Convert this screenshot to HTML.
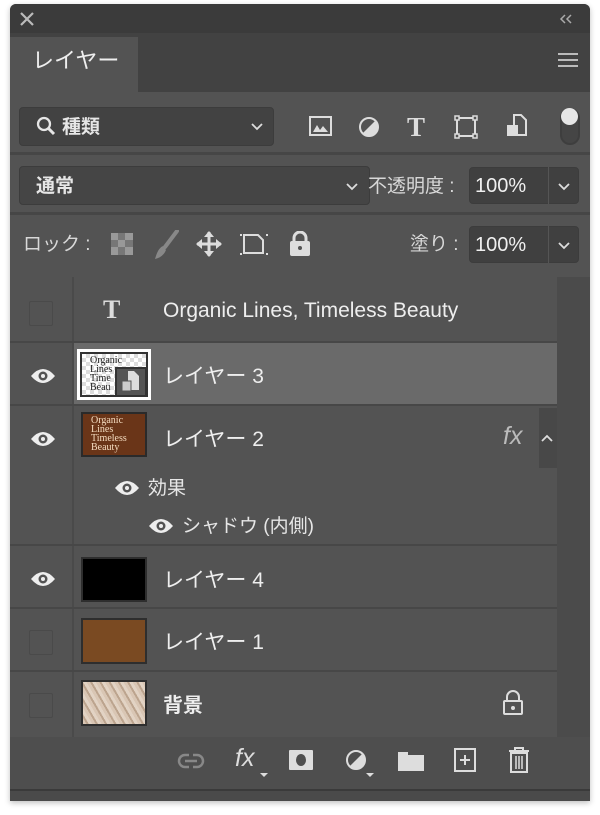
<!DOCTYPE html>
<html><head><meta charset="utf-8"><style>
*{margin:0;padding:0;box-sizing:border-box}
body{width:600px;height:815px;background:#fff;position:relative;overflow:hidden;font-family:"Liberation Sans","Noto Sans CJK JP",sans-serif;color:#e6e6e6}
.a{position:absolute}
.panel{left:10px;top:4px;width:580px;height:797px;background:#535353;border-radius:6px 6px 0 0;overflow:hidden;box-shadow:0 2px 6px rgba(0,0,0,.25)}
.t{font-size:19px;white-space:nowrap}
.box{background:#444;border:1px solid #3c3c3c;border-radius:4px}
.row{border-bottom:2px solid #474747}
svg{position:absolute}
.s{position:absolute;left:0;top:-4px;width:580px;height:801px}
</style></head><body>
<div class="a panel">
 <div class="a" style="left:0;top:0;width:580px;height:29px;background:#3b3b3b"></div>
 <svg style="left:10px;top:8px" width="14" height="14"><path d="M1 1l12 12M13 1L1 13" stroke="#bbb" stroke-width="2.2"/></svg>
 <svg style="left:549px;top:10px" width="14" height="10"><path d="M6 1L2 5l4 4M12 1L8 5l4 4" stroke="#aaa" stroke-width="1.5" fill="none"/></svg>
 <div class="a" style="left:0;top:29px;width:580px;height:59px;background:#424242"></div>
 <div class="a" style="left:0;top:33px;width:128px;height:55px;background:#535353"></div>
 <div class="a t" style="left:22px;top:39px;font-size:22px;color:#eee">レイヤー</div>
 <div class="a" style="left:548px;top:49px;width:20px;height:14px;border-top:2px solid #bbb;border-bottom:2px solid #bbb"></div>
 <div class="a" style="left:548px;top:55px;width:20px;height:4px;border-top:2px solid #bbb"></div>
 <div class="s">
 <!-- filter row -->
 <div class="a box" style="left:9px;top:107px;width:255px;height:39px;background:#424242"></div>
 <svg style="left:26px;top:116px" width="20" height="20"><circle cx="8" cy="8" r="6" stroke="#e6e6e6" stroke-width="2.3" fill="none"/><path d="M12 12l6 6" stroke="#e6e6e6" stroke-width="3"/></svg>
 <div class="a t" style="left:52px;top:112px;font-weight:bold">種類</div>
 <svg style="left:241px;top:123px" width="12" height="8"><path d="M1 1l5 5 5-5" stroke="#ddd" stroke-width="1.8" fill="none"/></svg>
 <svg style="left:299px;top:116px" width="24" height="22"><rect x="1" y="1" width="21" height="18" stroke="#ddd" stroke-width="2" fill="none"/><path d="M4 16l4-7 3 5 3-4 5 6z" fill="#ddd"/></svg>
 <svg style="left:348px;top:116px" width="22" height="22"><circle cx="11" cy="11" r="9" stroke="#ddd" stroke-width="2" fill="none"/><path d="M17.4 4.6A9 9 0 0 1 4.6 17.4z" fill="#ddd"/></svg>
 <div class="a" style="left:397px;top:112px;font-family:'Liberation Serif',serif;font-size:27px;font-weight:bold;color:#ddd">T</div>
 <svg style="left:444px;top:115px" width="24" height="24"><rect x="3" y="3" width="18" height="18" stroke="#ddd" stroke-width="2" fill="none"/><g fill="#535353" stroke="#ddd" stroke-width="1.5"><rect x="1" y="1" width="4" height="4"/><rect x="19" y="1" width="4" height="4"/><rect x="1" y="19" width="4" height="4"/><rect x="19" y="19" width="4" height="4"/></g></svg>
 <svg style="left:496px;top:114px" width="22" height="26"><path d="M8 1h7l5 5v15H8z" stroke="#ddd" stroke-width="2" fill="none"/><rect x="1" y="11" width="11" height="11" fill="#ddd"/></svg>
 <div class="a" style="left:550px;top:108px;width:20px;height:37px;border:2px solid #3e3e3e;border-radius:10px;background:#454545"></div>
 <div class="a" style="left:551px;top:108px;width:17px;height:17px;border-radius:50%;background:#e6e6e6"></div>
 <div class="a" style="left:0;top:152px;width:580px;height:3px;background:#464646"></div>
 <!-- blend row -->
 <div class="a box" style="left:9px;top:166px;width:351px;height:39px;background:#454545"></div>
 <div class="a t" style="left:26px;top:171px;font-weight:bold">通常</div>
 <svg style="left:336px;top:183px" width="12" height="8"><path d="M1 1l5 5 5-5" stroke="#ddd" stroke-width="1.8" fill="none"/></svg>
 <div class="a t" style="left:358px;top:171px;color:#d8d8d8">不透明度 :</div>
 <div class="a box" style="left:459px;top:167px;width:110px;height:37px;background:#404040"></div>
 <div class="a" style="left:538px;top:167px;width:1px;height:37px;background:#555"></div>
 <div class="a t" style="left:465px;top:175px;font-size:20px;color:#f0f0f0">100%</div>
 <svg style="left:548px;top:183px" width="12" height="8"><path d="M1 1l5 5 5-5" stroke="#ddd" stroke-width="1.8" fill="none"/></svg>
 <div class="a" style="left:0;top:212px;width:580px;height:3px;background:#464646"></div>
 <!-- lock row -->
 <div class="a t" style="left:13px;top:229px;color:#d8d8d8">ロック :</div>
 <svg style="left:101px;top:233px" width="22" height="22"><rect width="22" height="22" fill="#777"/><g fill="#999"><rect x="0" y="0" width="7" height="7"/><rect x="14" y="0" width="8" height="7"/><rect x="7" y="7" width="7" height="7"/><rect x="0" y="14" width="7" height="8"/><rect x="14" y="14" width="8" height="8"/></g></svg>
 <svg style="left:143px;top:230px" width="26" height="30"><path d="M24 1L12 17" stroke="#888" stroke-width="4" stroke-linecap="round"/><path d="M10 16c-4 2-6 6-8 13 5-1 9-4 11-9z" fill="#888"/></svg>
 <svg style="left:186px;top:231px" width="26" height="26"><path d="M13 1v24M1 13h24" stroke="#ddd" stroke-width="3"/><path d="M13 0l-5 6h10zM13 26l-5-6h10zM0 13l6-5v10zM26 13l-6-5v10z" fill="#ddd"/></svg>
 <svg style="left:230px;top:231px" width="28" height="26"><path d="M4 4h14l5 5v13H4z" stroke="#ddd" stroke-width="2" fill="none"/><g fill="#ddd"><rect x="0" y="3" width="2" height="2"/><rect x="26" y="3" width="2" height="2"/><rect x="0" y="22" width="2" height="2"/><rect x="26" y="22" width="2" height="2"/></g></svg>
 <svg style="left:279px;top:231px" width="22" height="26"><path d="M5 11V7a6 6 0 0 1 12 0v4" stroke="#ddd" stroke-width="3" fill="none"/><rect x="1" y="10" width="20" height="15" rx="2" fill="#ddd"/><circle cx="11" cy="17" r="2" fill="#535353"/></svg>
 <div class="a t" style="left:400px;top:229px;color:#d8d8d8">塗り :</div>
 <div class="a box" style="left:459px;top:226px;width:110px;height:37px;background:#404040"></div>
 <div class="a" style="left:538px;top:226px;width:1px;height:37px;background:#555"></div>
 <div class="a t" style="left:465px;top:234px;font-size:20px;color:#f0f0f0">100%</div>
 <svg style="left:548px;top:242px" width="12" height="8"><path d="M1 1l5 5 5-5" stroke="#ddd" stroke-width="1.8" fill="none"/></svg>
 <!-- layers -->
 <div class="a" style="left:0;top:277px;width:580px;height:460px;background:#535353"></div>
 <div class="a" style="left:62px;top:277px;width:2px;height:460px;background:#4a4a4a"></div>
 <div class="a" style="left:547px;top:277px;width:33px;height:460px;background:#4b4b4b"></div>
 <div class="a row" style="left:0;top:277px;width:547px;height:66px"></div>
 <div class="a row" style="left:0;top:343px;width:547px;height:63px"></div>
 <div class="a" style="left:64px;top:343px;width:483px;height:61px;background:#6a6a6a"></div>
 <div class="a row" style="left:0;top:406px;width:547px;height:140px"></div>
 <div class="a row" style="left:0;top:546px;width:547px;height:63px"></div>
 <div class="a row" style="left:0;top:609px;width:547px;height:63px"></div>
 <div class="a" style="left:529px;top:408px;width:18px;height:60px;background:#484848"></div>
 <!-- checkboxes -->
 <div class="a" style="left:19px;top:301px;width:24px;height:25px;border:1px solid #4a4a4a;border-radius:2px"></div>
 <div class="a" style="left:19px;top:630px;width:24px;height:25px;border:1px solid #4a4a4a;border-radius:2px"></div>
 <div class="a" style="left:19px;top:693px;width:24px;height:25px;border:1px solid #4a4a4a;border-radius:2px"></div>
 <!-- eyes -->
 <svg style="left:20px;top:367px" width="26" height="18"><path d="M1 9Q13-5 25 9Q13 23 1 9z" fill="#eee"/><circle cx="13" cy="9" r="4.5" fill="#535353"/><circle cx="13" cy="9" r="2" fill="#eee"/></svg>
 <svg style="left:20px;top:430px" width="26" height="18"><path d="M1 9Q13-5 25 9Q13 23 1 9z" fill="#eee"/><circle cx="13" cy="9" r="4.5" fill="#535353"/><circle cx="13" cy="9" r="2" fill="#eee"/></svg>
 <svg style="left:104px;top:479px" width="26" height="18"><path d="M1 9Q13-5 25 9Q13 23 1 9z" fill="#eee"/><circle cx="13" cy="9" r="4.5" fill="#535353"/><circle cx="13" cy="9" r="2" fill="#eee"/></svg>
 <svg style="left:138px;top:517px" width="26" height="18"><path d="M1 9Q13-5 25 9Q13 23 1 9z" fill="#eee"/><circle cx="13" cy="9" r="4.5" fill="#535353"/><circle cx="13" cy="9" r="2" fill="#eee"/></svg>
 <svg style="left:20px;top:570px" width="26" height="18"><path d="M1 9Q13-5 25 9Q13 23 1 9z" fill="#eee"/><circle cx="13" cy="9" r="4.5" fill="#535353"/><circle cx="13" cy="9" r="2" fill="#eee"/></svg>
 <!-- text layer -->
 <div class="a" style="left:93px;top:295px;font-family:'Liberation Serif',serif;font-size:26px;font-weight:bold;color:#ddd">T</div>
 <div class="a t" style="left:153px;top:299px;font-size:21px;color:#eee">Organic Lines, Timeless Beauty</div>
 <!-- layer 3 thumb -->
 <div class="a" style="left:67px;top:349px;width:74px;height:51px;background:#fff;padding:3px">
  <div style="width:68px;height:45px;border:2px solid #333;background:repeating-conic-gradient(#ddd 0 25%,#fff 0 50%) 0 0/8px 8px;font-family:'Liberation Serif',serif;font-size:10px;line-height:9px;color:#222;padding:2px 0 0 8px">Organic<br>Lines<br>Time<br>Beau</div>
 </div>
 <div class="a" style="left:105px;top:367px;width:32px;height:30px;background:#555;border:2px solid #333"></div>
 <svg style="left:111px;top:370px" width="20" height="24"><path d="M7 1h6l5 5v14H7z" fill="#ddd"/><rect x="1" y="11" width="9" height="10" fill="#ccc" stroke="#555"/></svg>
 <div class="a t" style="left:153px;top:360px;font-size:21px;color:#eee">レイヤー 3</div>
 <!-- layer 2 -->
 <div class="a" style="left:71px;top:412px;width:66px;height:45px;background:#6a3518;border:2px solid #2a2a2a;font-family:'Liberation Serif',serif;font-size:10px;line-height:9px;color:#f4dcc0;padding:2px 0 0 8px">Organic<br>Lines<br>Timeless<br>Beauty</div>
 <div class="a t" style="left:153px;top:423px;font-size:21px;color:#eee">レイヤー 2</div>
 <div class="a" style="left:493px;top:422px;font-size:25px;font-style:italic;color:#bbb;font-family:'Liberation Sans',sans-serif">fx</div>
 <svg style="left:531px;top:434px" width="12" height="8"><path d="M1 7l5-5 5 5" stroke="#ddd" stroke-width="1.8" fill="none"/></svg>
 <div class="a t" style="left:138px;top:473px;font-size:19px">効果</div>
 <div class="a t" style="left:172px;top:511px;font-size:19px">シャドウ (内側)</div>
 <!-- layer 4 -->
 <div class="a" style="left:71px;top:557px;width:66px;height:45px;background:#000;border:2px solid #2e2e2e"></div>
 <div class="a t" style="left:153px;top:564px;font-size:21px;color:#eee">レイヤー 4</div>
 <!-- layer 1 -->
 <div class="a" style="left:71px;top:618px;width:66px;height:46px;background:#7a4a22;border:2px solid #2e2e2e"></div>
 <div class="a t" style="left:153px;top:626px;font-size:21px;color:#eee">レイヤー 1</div>
 <!-- bg -->
 <div class="a" style="left:71px;top:680px;width:66px;height:46px;background:repeating-linear-gradient(60deg,#d9c6b4 0 3px,#bca48e 3px 5px,#e2d3c4 5px 8px);border:2px solid #2e2e2e"></div>
 <div class="a t" style="left:153px;top:689px;font-size:20px;font-weight:bold;color:#eee">背景</div>
 <svg style="left:492px;top:690px" width="22" height="26"><path d="M5 11V7a6 6 0 0 1 12 0v4" stroke="#ddd" stroke-width="2" fill="none"/><rect x="2" y="11" width="18" height="13" rx="1" stroke="#ddd" stroke-width="2" fill="none"/><circle cx="11" cy="18" r="2" fill="#ddd"/></svg>
 <!-- bottom bar -->
 <div class="a" style="left:0;top:737px;width:580px;height:52px;background:#4e4e4e"></div>
 <div class="a" style="left:0;top:789px;width:580px;height:2px;background:#3a3a3a"></div>
 <div class="a" style="left:0;top:791px;width:580px;height:14px;background:#4a4a4a"></div>
 <svg style="left:167px;top:753px" width="28" height="16"><rect x="2" y="2" width="24" height="12" rx="6" stroke="#888" stroke-width="2.5" fill="none"/><path d="M8 8h12" stroke="#888" stroke-width="2.5"/><path d="M12 2h4M12 14h4" stroke="#4e4e4e" stroke-width="3"/></svg>
 <div class="a" style="left:225px;top:744px;font-size:25px;font-style:italic;color:#ddd">fx</div>
 <div class="a" style="left:250px;top:773px;width:0;height:0;border-left:4px solid transparent;border-right:4px solid transparent;border-top:4px solid #ddd"></div>
 <svg style="left:279px;top:750px" width="24" height="20"><rect width="24" height="20" rx="1" fill="#ddd"/><ellipse cx="12" cy="10" rx="5" ry="6" fill="#4e4e4e"/></svg>
 <svg style="left:335px;top:749px" width="24" height="24"><circle cx="11" cy="11" r="9" stroke="#ddd" stroke-width="2" fill="none"/><path d="M17.4 4.6A9 9 0 0 1 4.6 17.4z" fill="#ddd"/></svg>
 <div class="a" style="left:356px;top:773px;width:0;height:0;border-left:4px solid transparent;border-right:4px solid transparent;border-top:4px solid #ddd"></div>
 <svg style="left:388px;top:749px" width="26" height="22"><path d="M0 3h10v3h16v16H0z" fill="#ddd"/></svg>
 <svg style="left:444px;top:748px" width="22" height="24"><rect x="1" y="1" width="20" height="22" stroke="#ddd" stroke-width="2" fill="none"/><path d="M11 7v10M6 12h10" stroke="#ddd" stroke-width="2"/></svg>
 <svg style="left:498px;top:747px" width="22" height="26"><path d="M1 4h20M7 4V1h8v3" stroke="#ddd" stroke-width="2" fill="none"/><path d="M3 6h16v19H3z" stroke="#ddd" stroke-width="2" fill="none"/><path d="M8 9v13M11 9v13M14 9v13" stroke="#ddd" stroke-width="1.5"/></svg>
 </div>
</div>
</body></html>
